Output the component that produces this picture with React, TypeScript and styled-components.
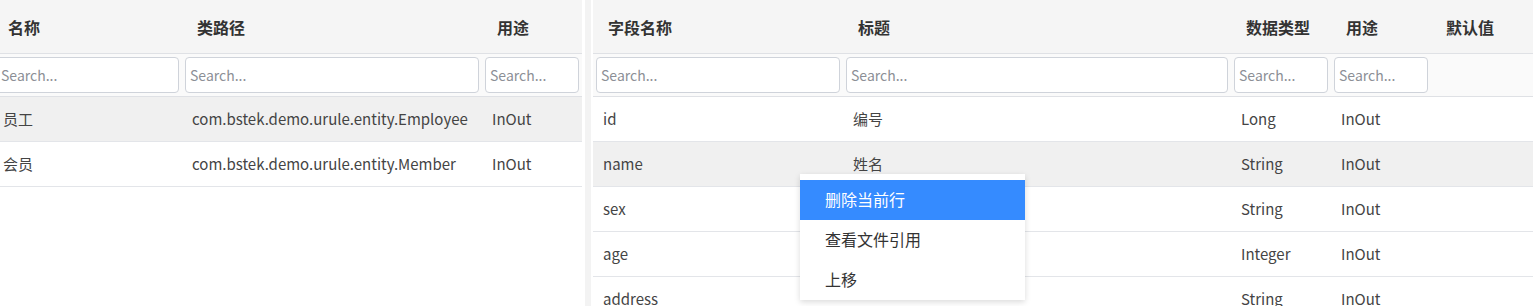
import styled, { createGlobalStyle } from 'styled-components';

const GlobalStyle = createGlobalStyle`
	html, body {
		margin: 0;
		padding: 0;
		background: #ffffff;
		overflow: hidden;
	}
	body {
		font-family: "Noto Sans CJK SC", "Noto Sans", sans-serif;
		font-size: 15px;
		line-height: 20px;
		color: #333;
	}
`;

const Page = styled.div`
	display: flex;
	width: 1533px;
	height: 306px;
	overflow: hidden;
`;

const LeftPanel = styled.div`
	width: 582px;
	flex: none;
	overflow: hidden;
`;

const Splitter = styled.div`
	width: 11px;
	flex: none;
	padding: 0 2px 0 3px;
	box-sizing: border-box;
	.bar {
		width: 6px;
		height: 100%;
		background: #f3f3f3;
	}
`;

const RightPanel = styled.div`
	flex: 1;
	position: relative;
	overflow: hidden;
`;

const Table = styled.table<{ $shift?: number }>`
	border-collapse: collapse;
	table-layout: fixed;
	margin-left: ${p => p.$shift || 0}px;
	width: calc(100% - ${p => p.$shift || 0}px);
`;

const HeadCell = styled.th`
	height: 53px;
	padding: 0 0 0 15px;
	text-align: left;
	font-weight: bold;
	font-size: 16px;
	line-height: 20px;
	color: #333;
	background: #f5f5f5;
	border-bottom: 1px solid #dfe1e5;
	white-space: nowrap;
`;

const FilterCell = styled.td`
	height: 42px;
	padding: 0 3px;
	background: #fafafa;
	border-bottom: 1px solid #dfe1e5;
`;

const SearchInput = styled.input`
	display: block;
	width: 100%;
	height: 36px;
	box-sizing: border-box;
	border: 1px solid #cfd3da;
	border-radius: 4px;
	padding: 0 4px;
	font-family: "Noto Sans CJK SC", "Noto Sans", sans-serif;
	font-size: 14px;
	color: #333;
	background: #fff;
	outline: none;
	&::placeholder {
		color: #8c8f96;
	}
`;

const Row = styled.tr<{ $active?: boolean }>`
	background: ${p => (p.$active ? '#f0f0f0' : '#fff')};
`;

const Cell = styled.td`
	height: 44px;
	padding: 0 0 0 10px;
	border-bottom: 1px solid #e3e5e9;
	font-size: 15px;
	line-height: 20px;
	color: #444;
	white-space: nowrap;
	overflow: hidden;
`;

const Menu = styled.div`
	position: absolute;
	left: 207px;
	top: 174px;
	width: 225px;
	padding-top: 6px;
	background: #fff;
	box-shadow: 0 2px 6px rgba(0, 0, 0, 0.15);
`;

const MenuItem = styled.div<{ $selected?: boolean }>`
	height: 40px;
	line-height: 38px;
	padding-left: 25px;
	font-size: 16px;
	color: ${p => (p.$selected ? '#fff' : '#333')};
	background: ${p => (p.$selected ? '#358bff' : '#fff')};
`;

const leftRows = [
	{ name: '员工', clazz: 'com.bstek.demo.urule.entity.Employee', act: 'InOut' },
	{ name: '会员', clazz: 'com.bstek.demo.urule.entity.Member', act: 'InOut' },
];

const fields = [
	{ name: 'id', label: '编号', type: 'Long', act: 'InOut' },
	{ name: 'name', label: '姓名', type: 'String', act: 'InOut' },
	{ name: 'sex', label: '', type: 'String', act: 'InOut' },
	{ name: 'age', label: '', type: 'Integer', act: 'InOut' },
	{ name: 'address', label: '', type: 'String', act: 'InOut' },
];

export default function App() {
	return (
		<>
			<GlobalStyle />
			<Page>
				<LeftPanel>
					<Table $shift={-7}>
						<colgroup>
							<col style={{ width: 189 }} />
							<col style={{ width: 300 }} />
							<col style={{ width: 100 }} />
						</colgroup>
						<thead>
							<tr>
								<HeadCell>名称</HeadCell>
								<HeadCell>类路径</HeadCell>
								<HeadCell>用途</HeadCell>
							</tr>
							<tr>
								<FilterCell><SearchInput placeholder="Search..." /></FilterCell>
								<FilterCell><SearchInput placeholder="Search..." /></FilterCell>
								<FilterCell><SearchInput placeholder="Search..." /></FilterCell>
							</tr>
						</thead>
						<tbody>
							{leftRows.map((r, i) => (
								<Row key={r.name} $active={i === 0}>
									<Cell>{r.name}</Cell>
									<Cell>{r.clazz}</Cell>
									<Cell>{r.act}</Cell>
								</Row>
							))}
						</tbody>
					</Table>
				</LeftPanel>
				<Splitter><div className="bar" /></Splitter>
				<RightPanel>
					<Table>
						<colgroup>
							<col style={{ width: 250 }} />
							<col style={{ width: 388 }} />
							<col style={{ width: 100 }} />
							<col style={{ width: 100 }} />
							<col style={{ width: 102 }} />
						</colgroup>
						<thead>
							<tr>
								<HeadCell>字段名称</HeadCell>
								<HeadCell>标题</HeadCell>
								<HeadCell>数据类型</HeadCell>
								<HeadCell>用途</HeadCell>
								<HeadCell>默认值</HeadCell>
							</tr>
							<tr>
								<FilterCell><SearchInput placeholder="Search..." /></FilterCell>
								<FilterCell><SearchInput placeholder="Search..." /></FilterCell>
								<FilterCell><SearchInput placeholder="Search..." /></FilterCell>
								<FilterCell><SearchInput placeholder="Search..." /></FilterCell>
								<FilterCell />
							</tr>
						</thead>
						<tbody>
							{fields.map((f, i) => (
								<Row key={f.name} $active={i === 1}>
									<Cell>{f.name}</Cell>
									<Cell>{f.label}</Cell>
									<Cell>{f.type}</Cell>
									<Cell>{f.act}</Cell>
									<Cell />
								</Row>
							))}
						</tbody>
					</Table>
					<Menu>
						<MenuItem $selected>删除当前行</MenuItem>
						<MenuItem>查看文件引用</MenuItem>
						<MenuItem>上移</MenuItem>
					</Menu>
				</RightPanel>
			</Page>
		</>
	);
}
